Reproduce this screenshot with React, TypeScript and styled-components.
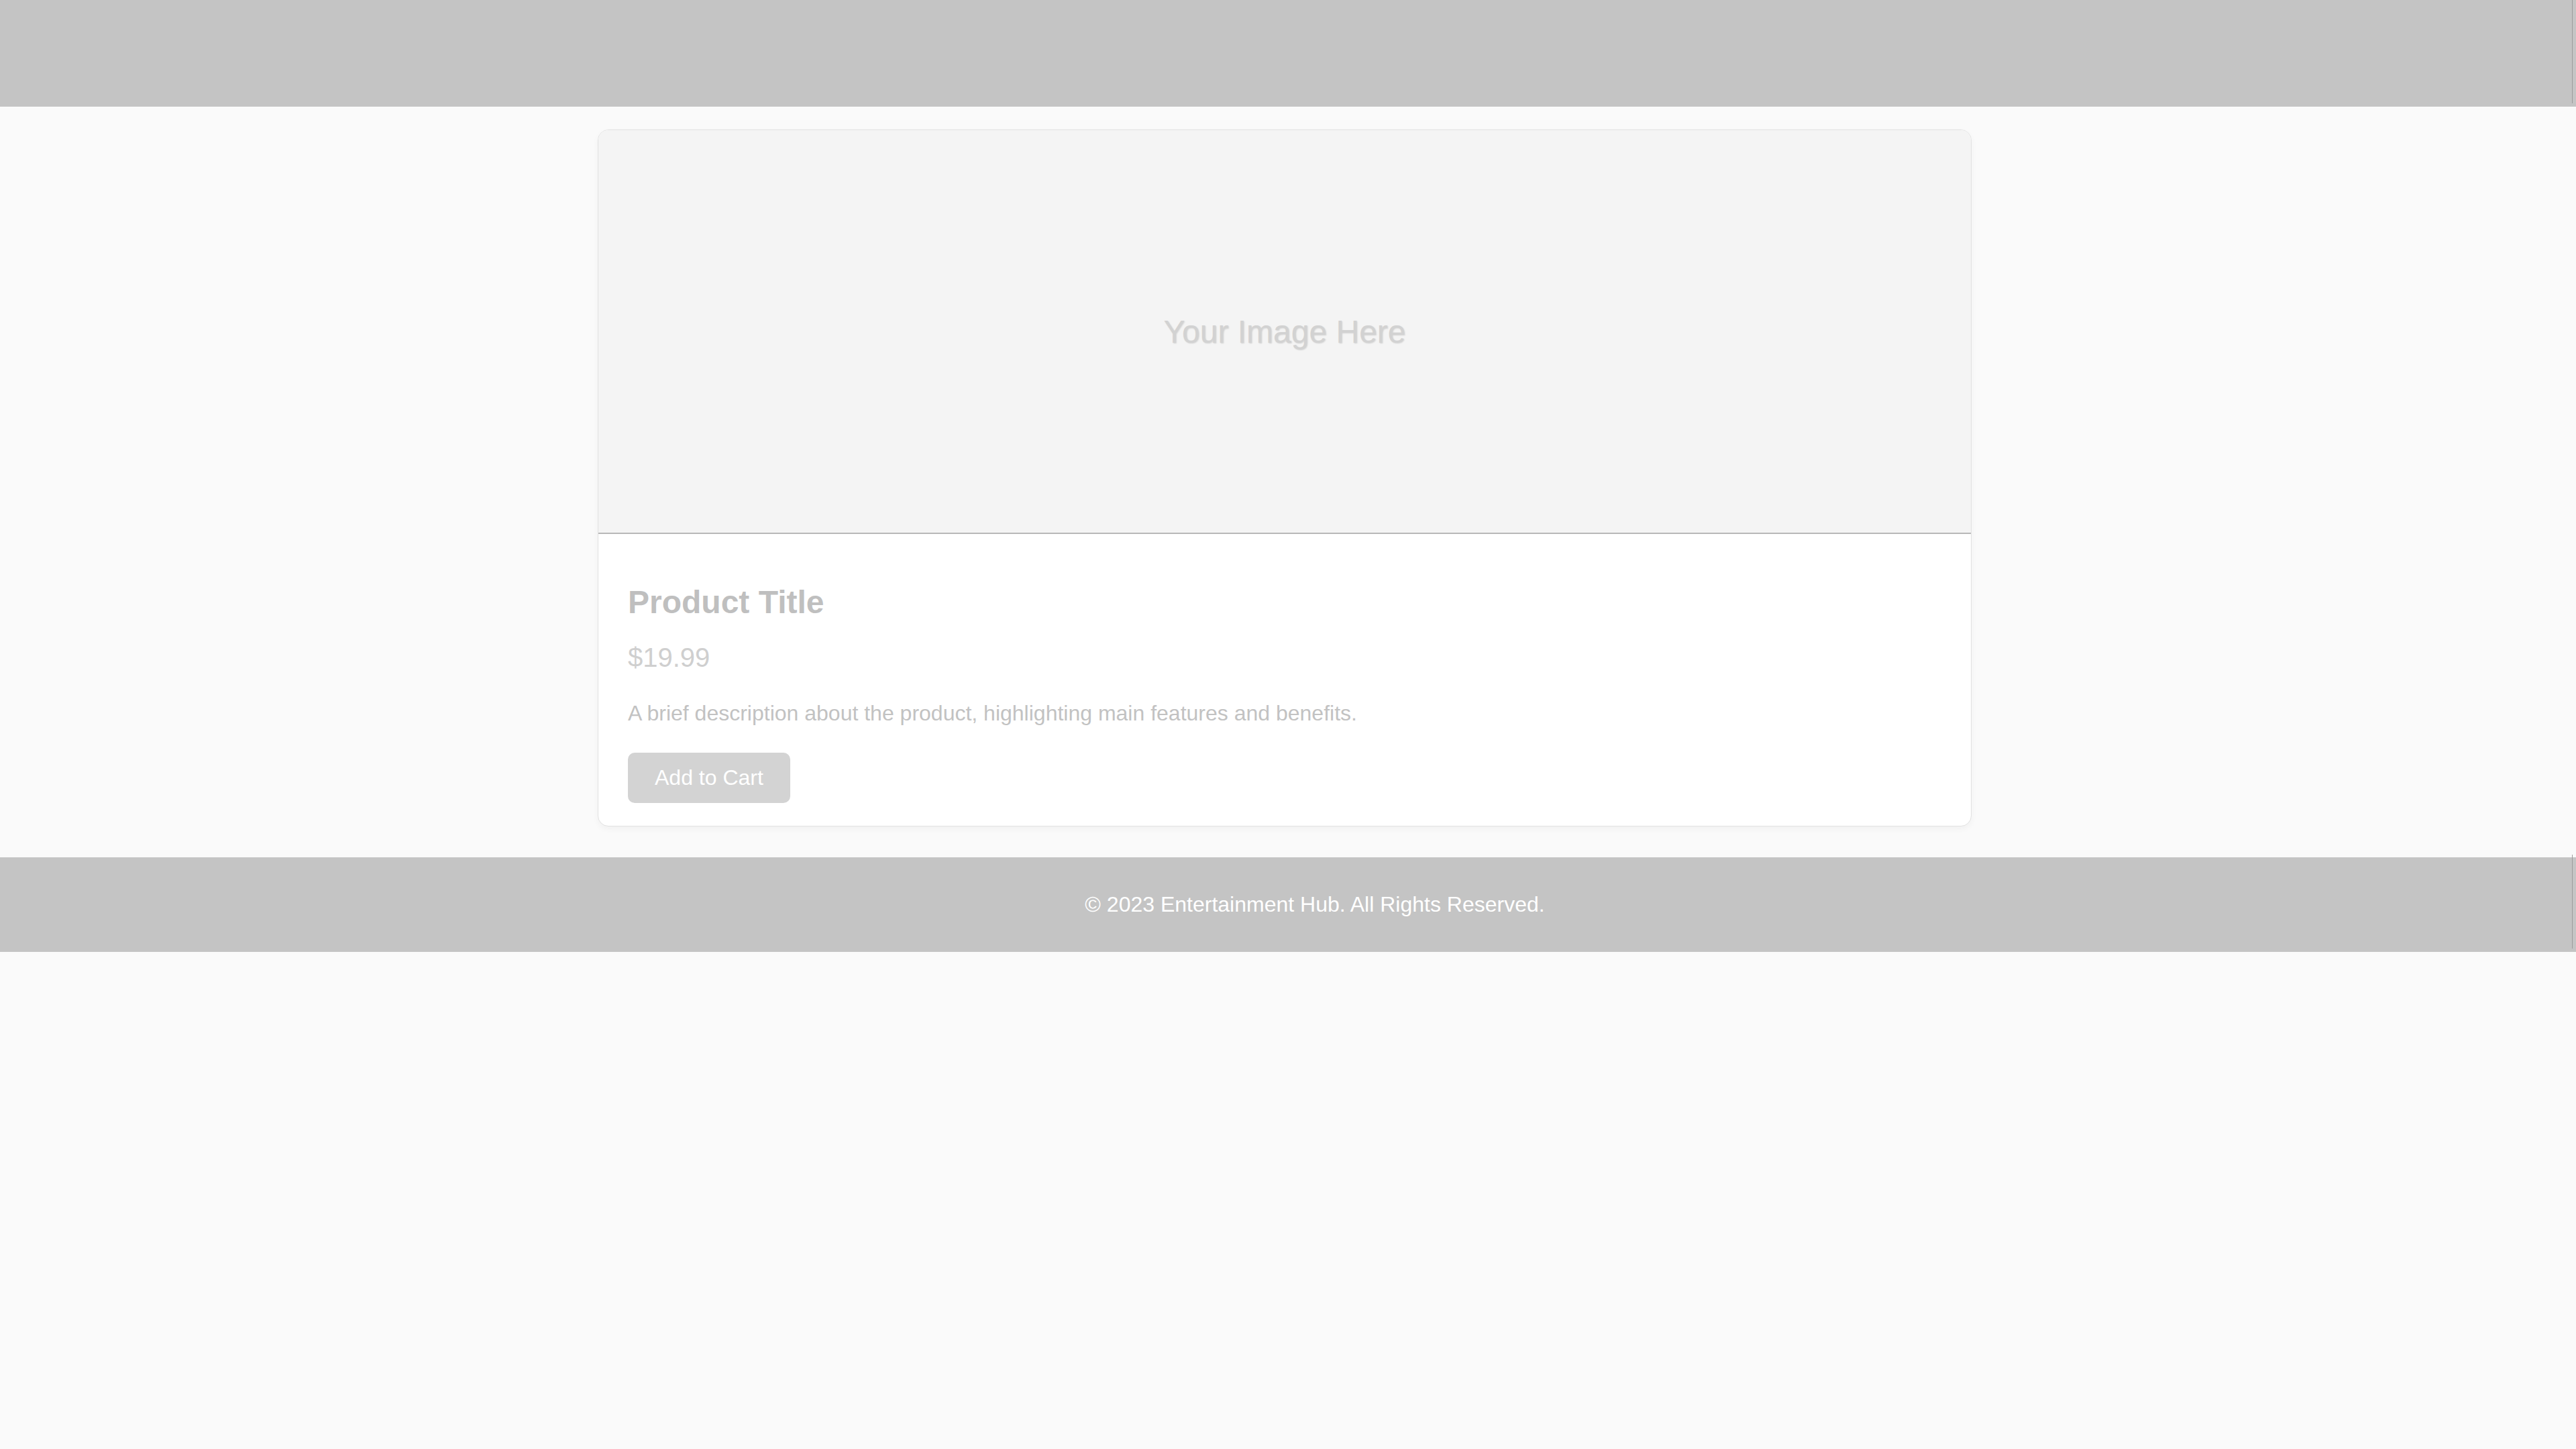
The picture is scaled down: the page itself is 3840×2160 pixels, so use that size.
import React from "react";
import styled, { createGlobalStyle } from "styled-components";

const GlobalStyle = createGlobalStyle`
  html, body {
    margin: 0;
    padding: 0;
    background: #fafafa;
    font-family: "Liberation Sans", Arial, sans-serif;
    overflow-x: hidden;
  }
  * { box-sizing: border-box; }
`;

const Header = styled.header`
  position: relative;
  height: 159px;
  background: #c4c4c4;
  &::after {
    content: "";
    position: absolute;
    top: 0;
    bottom: 5px;
    right: 5px;
    width: 1px;
    background: #9c9c9c;
  }
`;

const Main = styled.main`
  display: flex;
  justify-content: center;
  padding: 34px 10px 46px 0;
`;

const Card = styled.article`
  width: 2048px;
  background: #ffffff;
  border: 1px solid #e2e2e2;
  border-radius: 16px;
  overflow: hidden;
  box-shadow: 0 4px 10px rgba(0, 0, 0, 0.04);
`;

const ImageArea = styled.div`
  height: 602px;
  background: #f4f4f4;
  border-bottom: 2px solid #b8b8b8;
  display: flex;
  align-items: center;
  justify-content: center;
  font-size: 48px;
  line-height: 55px;
  color: #d2d2d2;
  text-shadow: 1px 1px 2px rgba(0, 0, 0, 0.14);
`;

const Content = styled.div`
  display: flex;
  flex-direction: column;
  align-items: flex-start;
  padding: 74px 44px 34px 44px;
`;

const Title = styled.h2`
  margin: 0;
  font-size: 48px;
  line-height: 55px;
  font-weight: 700;
  color: #bfbfbf;
`;

const Price = styled.p`
  margin: 32px 0 0;
  font-size: 40px;
  line-height: 46px;
  color: #cfcfcf;
`;

const Description = styled.p`
  margin: 42px 0 0;
  font-size: 32px;
  line-height: 37px;
  color: #c2c2c2;
`;

const Button = styled.button`
  margin-top: 40px;
  padding: 20px 40px;
  font-family: inherit;
  font-size: 32px;
  line-height: 35px;
  color: #ffffff;
  background: #d3d3d3;
  border: none;
  border-radius: 10px;
  cursor: pointer;
`;

const Footer = styled.footer`
  position: relative;
  padding: 52px 0 52px 80px;
  background: #c4c4c4;
  color: #ffffff;
  font-size: 32px;
  line-height: 37px;
  text-align: center;
  &::after {
    content: "";
    position: absolute;
    top: -4px;
    bottom: 5px;
    right: 5px;
    width: 1px;
    background: #9c9c9c;
  }
`;

export default function App() {
  return (
    <>
      <GlobalStyle />
      <Header />
      <Main>
        <Card>
          <ImageArea>Your Image Here</ImageArea>
          <Content>
            <Title>Product Title</Title>
            <Price>$19.99</Price>
            <Description>
              A brief description about the product, highlighting main features and benefits.
            </Description>
            <Button>Add to Cart</Button>
          </Content>
        </Card>
      </Main>
      <Footer>© 2023 Entertainment Hub. All Rights Reserved.</Footer>
    </>
  );
}
